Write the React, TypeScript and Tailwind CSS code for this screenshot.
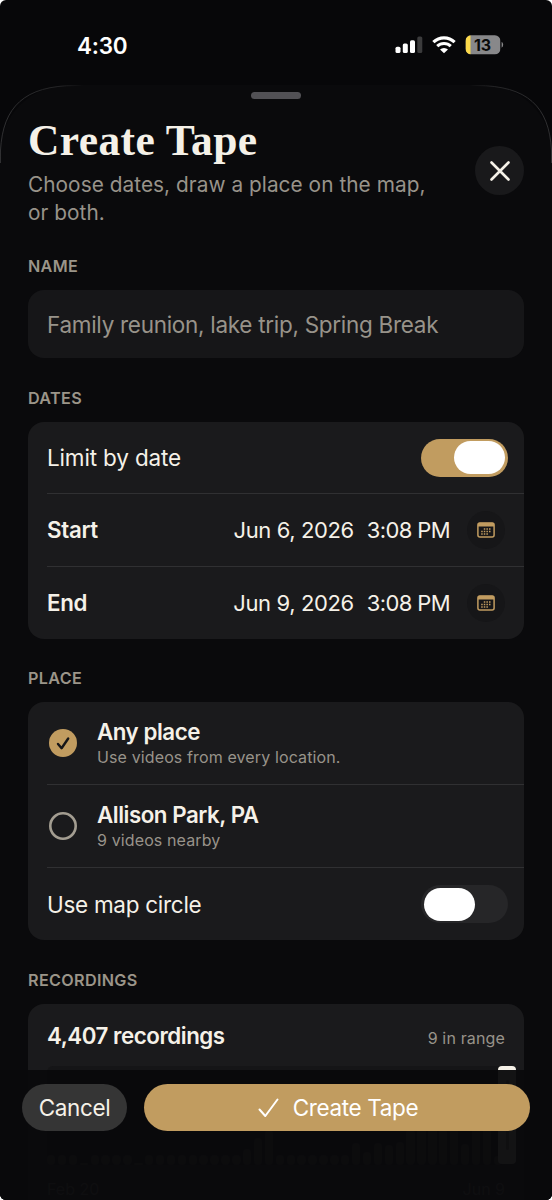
import React, { useState } from 'react';
import clsx from 'clsx';

const bars = [
    10, 10, 10, 2, 10, 10, 10, 10, 2, 10, 10, 10, 10, 10, 10, 10, 10, 10, 16, 27, 35, 10, 10, 10, 10, 10, 10, 10,
    22, 13, 22, 20, 23, 36, 40, 44, 36, 38, 21, 42, 40, 9,
];

function StatusBar() {
    return (
        <div className="flex h-[85px] shrink-0 items-start justify-between pt-[29px] pr-[48px] pl-[77px]">
            <span className="text-[22.5px] leading-[33px] font-semibold tracking-[-0.2px] text-white">4:30</span>
            <svg width="109" height="32" viewBox="0 0 109 32" fill="none">
                <rect x="0.5" y="17.7" width="5" height="6.3" rx="1.6" fill="#fff" />
                <rect x="7.8" y="14.5" width="5" height="9.5" rx="1.6" fill="#fff" />
                <rect x="15" y="11.2" width="5" height="12.8" rx="1.6" fill="#fff" />
                <rect x="22.3" y="7.5" width="5" height="16.5" rx="1.6" fill="#3b3b3c" />
                <path d="M38.4 13.2a15.2 15.2 0 0 1 21.2 0" stroke="#fff" strokeWidth="3.2" />
                <path d="M42.2 17.2a9.8 9.8 0 0 1 13.6 0" stroke="#fff" strokeWidth="3" />
                <path d="M45 20.6a5.6 5.6 0 0 1 8 0L49 24.3z" fill="#fff" />
                <clipPath id="battery">
                    <rect x="70.5" y="6.3" width="35" height="19" rx="5.6" />
                </clipPath>
                <g clipPath="url(#battery)">
                    <rect x="70.5" y="6" width="35" height="20" fill="#88888a" />
                    <rect x="70.5" y="6" width="5" height="20" fill="#fcd94a" />
                </g>
                <path d="M106.6 12.8v6q1.6-.8 1.6-3t-1.6-3z" fill="#88888a" />
                <text x="87.6" y="21.6" textAnchor="middle" fill="#0a0a0a" fontSize="16" fontWeight="700">
                    13
                </text>
            </svg>
        </div>
    );
}

function SectionLabel({ children }: { children: React.ReactNode }) {
    return <h2 className="text-[16.2px] leading-6 font-semibold tracking-[0.32px] text-[#9b9589]">{children}</h2>;
}

function Divider() {
    return <div className="ml-[19px] h-px bg-[#303032]" />;
}

function Toggle({ checked, onChange }: { checked: boolean; onChange: (value: boolean) => void }) {
    return (
        <button
            role="switch"
            aria-checked={checked}
            onClick={() => onChange(!checked)}
            className={clsx(
                'flex h-[38px] w-[87px] items-center rounded-full px-[3px]',
                checked ? 'justify-end bg-[#c19c60]' : 'justify-start bg-[#262628]',
            )}
        >
            <span className="h-[33px] w-[51px] rounded-full bg-white" />
        </button>
    );
}

function CalendarIcon() {
    return (
        <svg width="18" height="16" viewBox="0 0 18 16">
            <rect x="0.9" y="0.9" width="16.2" height="14.2" rx="2" fill="none" stroke="#c19c60" strokeWidth="1.5" />
            <path d="M1 2.2Q1 .8 2.5.8h13Q17 .8 17 2.2v2.3H1z" fill="#c19c60" />
            <path d="M6.8 6.9h7.8M4.2 9.4h10.3M4.2 11.9h7.2" stroke="#c19c60" strokeWidth="1.5" strokeDasharray="1.5 1.1" />
        </svg>
    );
}

function DateRow({ label, date, time }: { label: string; date: string; time: string }) {
    return (
        <div className="flex h-[72px] items-center pr-[19px] pl-[19px]">
            <span className="flex-1 text-[22.3px] font-semibold tracking-[-0.3px]">{label}</span>
            <span className="text-[22px] tracking-[-0.4px] whitespace-pre">{date}</span>
            <span className="ml-[13px] text-[22px] tracking-[-0.6px] whitespace-pre">{time}</span>
            <button className="ml-[17px] flex size-[38px] items-center justify-center rounded-full bg-[#161618]">
                <CalendarIcon />
            </button>
        </div>
    );
}

function PlaceRow({ title, detail, selected, onSelect }: { title: string; detail: string; selected: boolean; onSelect: () => void }) {
    return (
        <button onClick={onSelect} className="flex h-[82px] w-full items-center pl-[21px] text-left">
            <svg width="28" height="28" viewBox="0 0 28 28" fill="none">
                {selected ? (
                    <>
                        <circle cx="14" cy="14" r="14" fill="#c19c60" />
                        <path d="M9 15l3.6 4.2L19.2 9.5" stroke="#161618" strokeWidth="2.4" strokeLinecap="round" strokeLinejoin="round" />
                    </>
                ) : (
                    <circle cx="14" cy="14" r="12.7" stroke="#a39d91" strokeWidth="2.6" />
                )}
            </svg>
            <span className="ml-5 flex flex-col">
                <span className="text-[22.3px] leading-[28px] font-semibold tracking-[-0.45px]">{title}</span>
                <span className="text-[16px] leading-[23px] tracking-[0.12px] text-[#98938a]">{detail}</span>
            </span>
        </button>
    );
}

function Histogram() {
    return (
        <div className="relative mx-[19px] mt-[-2px] h-[99px] rounded-[6px] bg-[#151517]">
            <div className="flex h-full items-end gap-[2.5px]">
                {bars.map((height, index) => (
                    <span key={index} className="w-[8.4px] shrink-0 rounded-full bg-[#4a4844]" style={{ height }} />
                ))}
            </div>
            <div className="absolute top-0 right-[-11px] flex h-[98px] w-[18px] items-center justify-center rounded-[4px] bg-[#f5f1e8]">
                <span className="h-[70px] w-[3px] rounded-full bg-[#9b9589]" />
            </div>
        </div>
    );
}

export default function App() {
    const [limitByDate, setLimitByDate] = useState(true);
    const [useCircle, setUseCircle] = useState(false);
    const [place, setPlace] = useState('any');

    return (
        <div className="h-[1200px] w-[552px] bg-white font-['Inter',sans-serif] text-[#f5f1e8]">
            <div className="relative flex h-full flex-col overflow-hidden rounded-[6px] bg-[#070709]">
                <StatusBar />

                {/* Sheet */}
                <div className="relative flex-1 rounded-t-[68px] bg-[#0a0a0c] px-7">
                    <svg className="absolute top-0 left-0" width="552" height="90" viewBox="0 0 552 90" fill="none">
                        <defs>
                            <linearGradient id="edge" x1="0" x2="552" y1="0" y2="0" gradientUnits="userSpaceOnUse">
                                <stop offset="0" stopColor="#303032" />
                                <stop offset="0.11" stopColor="#222224" />
                                <stop offset="0.15" stopColor="#0a0a0c" />
                                <stop offset="0.85" stopColor="#0a0a0c" />
                                <stop offset="0.89" stopColor="#222224" />
                                <stop offset="1" stopColor="#303032" />
                            </linearGradient>
                        </defs>
                        <path d="M.5 78V65C3 22 24 .5 76 .5h400C528 .5 549 22 551.5 65v13" stroke="url(#edge)" />
                    </svg>
                    <div className="absolute top-[7px] left-[251px] h-[7px] w-[50px] rounded-full bg-[#525155]" />

                    <header className="flex h-[169px] items-start justify-between pt-[30px]">
                        <div>
                            <h1 className="font-['Liberation_Serif',serif] text-[43.5px] leading-[50px] font-bold tracking-[0.4px] whitespace-nowrap">Create Tape</h1>
                            <p className="mt-[5.5px] w-[420px] text-[20.8px] leading-[28.5px] tracking-[0.05px] text-[#98938a]">
                                Choose dates, draw a place on the map,
                                <br />
                                or both.
                            </p>
                        </div>
                        <button aria-label="Close" className="mt-[31px] flex size-[49px] shrink-0 items-center justify-center rounded-full bg-[#19191b]">
                            <svg width="20" height="20" viewBox="0 0 20 20" fill="none">
                                <path d="M1.5 1.5l17 17M18.5 1.5l-17 17" stroke="#f5f1e8" strokeWidth="2.6" strokeLinecap="round" />
                            </svg>
                        </button>
                    </header>

                    {/* Name */}
                    <SectionLabel>NAME</SectionLabel>
                    <input
                        placeholder="Family reunion, lake trip, Spring Break"
                        className="mt-3 block h-[68px] w-full rounded-[16px] bg-[#161618] px-[19px] text-[22.5px] tracking-[-0.29px] placeholder-[#98938a] outline-none"
                    />

                    {/* Dates */}
                    <div className="mt-7">
                        <SectionLabel>DATES</SectionLabel>
                        <div className="mt-3 rounded-[16px] bg-[#1a1a1c]">
                            <div className="flex h-[71px] items-center justify-between pr-4 pl-[19px]">
                                <span className="text-[22.5px] tracking-[-0.15px]">Limit by date</span>
                                <Toggle checked={limitByDate} onChange={setLimitByDate} />
                            </div>
                            <Divider />
                            <DateRow label="Start" date="Jun 6, 2026" time="3:08 PM" />
                            <Divider />
                            <DateRow label="End" date="Jun 9, 2026" time="3:08 PM" />
                        </div>
                    </div>

                    {/* Place */}
                    <div className="mt-[27px]">
                        <SectionLabel>PLACE</SectionLabel>
                        <div className="mt-3 rounded-[16px] bg-[#1a1a1c]">
                            <PlaceRow
                                title="Any place"
                                detail="Use videos from every location."
                                selected={place === 'any'}
                                onSelect={() => setPlace('any')}
                            />
                            <Divider />
                            <PlaceRow
                                title="Allison Park, PA"
                                detail="9 videos nearby"
                                selected={place === 'allison'}
                                onSelect={() => setPlace('allison')}
                            />
                            <Divider />
                            <div className="flex h-[72px] items-center justify-between pr-4 pl-[19px]">
                                <span className="pt-[1px] text-[22.5px] tracking-[-0.28px]">Use map circle</span>
                                <Toggle checked={useCircle} onChange={setUseCircle} />
                            </div>
                        </div>
                    </div>

                    {/* Recordings */}
                    <div className="mt-[28px]">
                        <SectionLabel>RECORDINGS</SectionLabel>
                        <div className="mt-3 h-[220px] rounded-t-[16px] bg-[#1a1a1c]">
                            <div className="flex h-[64px] items-center justify-between px-[19px]">
                                <span className="text-[22.3px] font-semibold tracking-[-0.45px]">4,407 recordings</span>
                                <span className="pt-[4px] text-[16px] tracking-[0.15px] text-[#98938a]">9 in range</span>
                            </div>
                            <Histogram />
                            <div className="mt-3 flex justify-between px-[19px] text-[16px] text-[#8a857c]">
                                <span>Feb 20</span>
                                <span>Jun 9</span>
                            </div>
                        </div>
                    </div>
                </div>

                {/* Footer actions */}
                <footer className="absolute inset-x-0 bottom-0 flex h-[130px] items-start gap-[17px] bg-[#09090b]/96 pt-[14px] pr-[22px] pl-[22px]">
                    <button className="h-[47px] w-[105px] rounded-full bg-[#353535] text-[22.5px] tracking-[-0.35px]">Cancel</button>
                    <button className="flex h-[47px] flex-1 items-center justify-center gap-[14px] rounded-full bg-[#c19c60] pl-[2px] text-[22.5px] tracking-[-0.35px] text-white">
                        <svg width="21" height="20" viewBox="0 0 21 20" fill="none">
                            <path d="M1.5 11.5l5.8 6.5L19.5 1.5" stroke="#fff" strokeWidth="2" strokeLinecap="round" strokeLinejoin="round" />
                        </svg>
                        <span>Create Tape</span>
                    </button>
                </footer>
            </div>
        </div>
    );
}
